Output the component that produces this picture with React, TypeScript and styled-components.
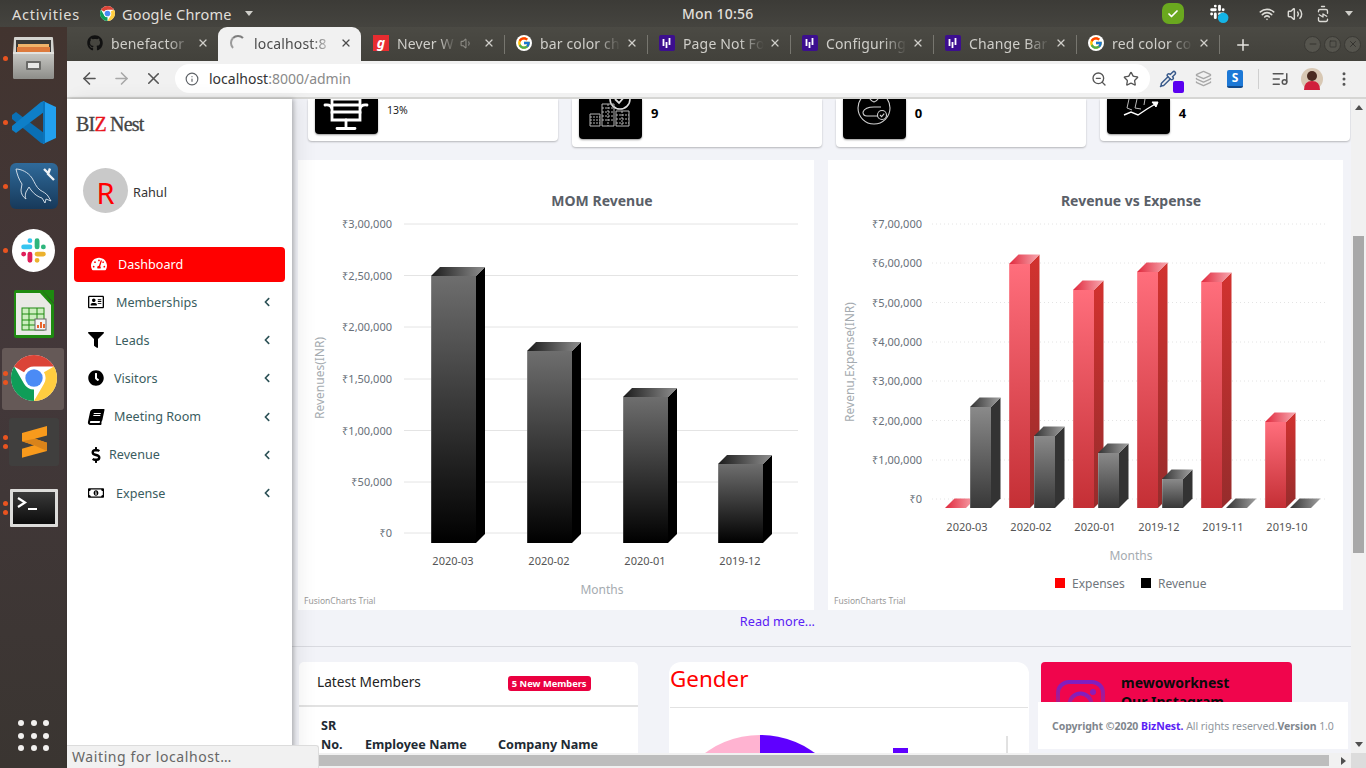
import React from 'react'
import styled, { createGlobalStyle } from 'styled-components'
import { ArrowLeft, ArrowRight, X, Info, ZoomOut, Star, ListMusic, EllipsisVertical, Pipette, Layers, Plus, Minus, Square, Wifi, Volume2, Volume1, BatteryCharging, Check } from 'lucide-react'
import { FaGithub, FaTachometerAlt, FaRegAddressCard, FaFilter, FaClock, FaBook, FaDollarSign, FaRegMoneyBillAlt, FaChevronLeft } from 'react-icons/fa'
import { FcGoogle } from 'react-icons/fc'

const UI_FONT = '"Noto Sans", "Open Sans", sans-serif'

const GlobalStyle = createGlobalStyle`
  html, body {
    margin: 0;
    padding: 0;
    width: 1366px;
    height: 768px;
    overflow: hidden;
    font-family: ${UI_FONT};
  }
  * { box-sizing: border-box; }
`

const Desktop = styled.div`
  width: 1366px;
  height: 768px;
  display: flex;
  flex-direction: column;
  overflow: hidden;
`

/* ---------- ubuntu top bar ---------- */
const TopBar = styled.div`
  height: 27px;
  flex: none;
  display: flex;
  align-items: center;
  background: linear-gradient(#3c3b37, #45443f);
  color: #e0dfda;
  font-size: 14.5px;
  letter-spacing: 0.2px;
`
const TopLeft = styled.div`
  width: 682px;
  flex: none;
  display: flex;
  align-items: center;
  padding-left: 12px;
`
const Activities = styled.span`
  letter-spacing: 0.75px;
`
const AppMenu = styled.div`
  display: flex;
  align-items: center;
  margin-left: 20px;
  gap: 7px;
`
const Caret = styled.span`
  width: 0;
  height: 0;
  margin-left: 6px;
  border-left: 4.5px solid transparent;
  border-right: 4.5px solid transparent;
  border-top: 5px solid #cfcec9;
`
const Clock = styled.div`
  width: 70px;
  white-space: nowrap;
  font-size: 14px;
  font-weight: 500;
`
const Tray = styled.div`
  margin-left: auto;
  display: flex;
  align-items: center;
  padding-right: 11px;
`
const TrayItem = styled.div<{ $w: number; $ml?: number }>`
  width: ${p => p.$w}px;
  margin-left: ${p => p.$ml || 0}px;
  display: flex;
  align-items: center;
  justify-content: center;
  color: #dcdbd6;
`
const GreenShield = styled.div`
  width: 22px;
  height: 21px;
  border-radius: 7px;
  background: #6aa81f;
  display: flex;
  align-items: center;
  justify-content: center;
  color: #fff;
`
const BatteryIcon = styled(BatteryCharging)`
  transform: rotate(-90deg);
`

/* ---------- dock ---------- */
const Workspace = styled.div`
  flex: 1;
  min-height: 0;
  display: flex;
`
const Dock = styled.div`
  width: 67px;
  flex: none;
  display: flex;
  flex-direction: column;
  align-items: stretch;
  background: linear-gradient(#42342f 0%, #43383a 45%, #3a3531 100%);
`
const DockItem = styled.div<{ $active?: boolean; $drop?: number }>`
  position: relative;
  height: 64px;
  display: flex;
  align-items: center;
  justify-content: center;
  margin-top: ${p => p.$drop || 0}px;
  &:first-child { margin-top: -1px; }
  ${p => p.$active && `
    &::before {
      content: '';
      position: absolute;
      left: 2px;
      top: 2px;
      width: 62px;
      height: 62px;
      border-radius: 3px;
      background: #655957;
    }
  `}
  svg { position: relative; }
`
const RunDots = styled.div`
  position: absolute;
  left: 3px;
  top: 0;
  bottom: 0;
  z-index: 1;
  display: flex;
  flex-direction: column;
  justify-content: center;
  gap: 4px;
`
const RunDot = styled.span`
  width: 5px;
  height: 5px;
  border-radius: 50%;
  background: #e95420;
`
const AppGrid = styled.div`
  margin-top: auto;
  margin-bottom: 17px;
  margin-left: 18px;
  display: grid;
  grid-template-columns: repeat(3, 6px);
  gap: 6.5px;
`
const AppGridDot = styled.span`
  width: 6px;
  height: 6px;
  border-radius: 50%;
  background: #f2f0ee;
`

/* ---------- browser chrome ---------- */
const Browser = styled.div`
  flex: 1;
  min-width: 0;
  display: flex;
  flex-direction: column;
  position: relative;
`
const TabStrip = styled.div`
  height: 34px;
  flex: none;
  display: flex;
  align-items: stretch;
  padding-left: 8px;
  background: linear-gradient(#4b4a44, #42413b);
`
const Tab = styled.div<{ $active?: boolean; $first?: boolean }>`
  position: relative;
  width: 143px;
  flex: none;
  display: flex;
  align-items: center;
  padding: 0 9px 2px 12px;
  font-size: 14px;
  letter-spacing: 0.15px;
  color: ${p => (p.$active ? '#4c4c4c' : '#cfcec9')};
  background: ${p => (p.$active ? '#f1f1f1' : 'transparent')};
  border-radius: 9px 9px 0 0;
  ${p => !p.$active && !p.$first && `
    &::before {
      content: '';
      position: absolute;
      left: 0;
      top: 8px;
      bottom: 7px;
      width: 1px;
      background: #77766f;
    }
  `}
`
const Favicon = styled.div`
  width: 16px;
  height: 16px;
  flex: none;
  margin-right: 8px;
  display: flex;
  align-items: center;
  justify-content: center;
`
const GoogleIcon = styled(Favicon)`
  background: #fff;
  border-radius: 50%;
`
const GaanaIcon = styled(Favicon)`
  background: #e72c30;
  color: #fff;
  font-size: 14px;
  font-weight: 700;
  font-style: italic;
  line-height: 16px;
`
const HackIcon = styled(Favicon)`
  background: #3c0e8f;
  border-radius: 2px;
`
const Spinner = styled(Favicon)`
  border-radius: 50%;
  border: 2px solid transparent;
  border-top-color: #7d7d7d;
  border-left-color: #9a9a9a;
`
const TabTitle = styled.div`
  flex: 1;
  min-width: 0;
  overflow: hidden;
  white-space: nowrap;
  -webkit-mask-image: linear-gradient(90deg, #000 66%, transparent 94%);
  mask-image: linear-gradient(90deg, #000 66%, transparent 94%);
`
const TabClose = styled.div`
  width: 12px;
  flex: none;
  display: flex;
  align-items: center;
  justify-content: center;
`
const AudioIcon = styled(Volume1)`
  flex: none;
  margin-right: 10px;
  color: #8c8b85;
`
const NewTab = styled.div`
  width: 46px;
  border-left: 1px solid #77766f;
  margin: 8px 0 7px;
  display: flex;
  align-items: center;
  justify-content: center;
  color: #e6e5e0;
`
const WindowButtons = styled.div`
  margin-left: auto;
  margin-right: 5px;
  display: flex;
  align-items: center;
  gap: 3px;
`
const WindowButton = styled.div`
  width: 17px;
  height: 17px;
  border-radius: 50%;
  background: #56554e;
  border: 1px solid #3a3934;
  color: #2f2e2a;
  display: flex;
  align-items: center;
  justify-content: center;
`
const Toolbar = styled.div`
  height: 38px;
  flex: none;
  display: flex;
  align-items: center;
  padding-bottom: 1px;
  background: #f1f1f1;
  border-bottom: 2px solid #d6d6d4;
`
const NavButton = styled.div<{ $dim?: boolean; $w: number }>`
  width: ${p => p.$w}px;
  flex: none;
  display: flex;
  align-items: center;
  justify-content: center;
  color: ${p => (p.$dim ? '#a8a8a8' : '#555')};
`
const AddressBar = styled.div`
  width: 975px;
  height: 29px;
  flex: none;
  display: flex;
  align-items: center;
  padding: 0 3px 0 10px;
  background: #fff;
  border-radius: 15px;
  font-size: 14px;
  color: #8a8a8a;
`
const Host = styled.span`
  color: #333;
`
const UrlText = styled.div`
  margin-left: 10px;
  flex: 1;
`
const BlueS = styled.div`
  width: 16px;
  height: 18px;
  background: #1c78d6;
  border-radius: 2px;
  border-bottom: 2px solid #124a8a;
  color: #fff;
  font-weight: 700;
  font-size: 12px;
  line-height: 16px;
  text-align: center;
`
const ExtBadge = styled.div`
  position: absolute;
  right: 2px;
  top: 11px;
  width: 11px;
  height: 12px;
  border-radius: 2px;
  background: #5a00f0;
`
const ExtSlot = styled(NavButton)`
  position: relative;
`
const ToolbarSep = styled.div`
  width: 1px;
  height: 20px;
  background: #cfcfcf;
  flex: none;
`

/* ---------- page ---------- */
const Viewport = styled.div`
  flex: 1;
  min-height: 0;
  display: flex;
  position: relative;
`
const Sidebar = styled.aside`
  width: 225px;
  flex: none;
  background: #fff;
  position: relative;
  z-index: 2;
  box-shadow: 2px 0 4px rgba(0, 0, 0, 0.22), 8px 0 18px rgba(0, 0, 0, 0.07);
`
const Logo = styled.div`
  height: 50px;
  padding: 13px 0 0 9px;
  font-family: "Liberation Serif", serif;
  font-size: 20px;
  line-height: 24px;
  letter-spacing: -0.8px;
  color: #444;
  -webkit-text-stroke: 0.3px #444;
`
const LogoRed = styled.span`
  color: #e8141c;
  -webkit-text-stroke: 0.3px #e8141c;
`
const UserRow = styled.div`
  display: flex;
  align-items: center;
  margin: 19px 0 34px 16px;
  gap: 5px;
  font-size: 12.7px;
  line-height: 20px;
  color: #333;
`
const UserName = styled.span`
  margin-top: 2px;
`
const Avatar = styled.div`
  width: 45px;
  height: 45px;
  border-radius: 50%;
  background: #c9c9c9;
  color: #f00;
  font-size: 29px;
  line-height: 50px;
  text-align: center;
`
const NavRow = styled.div`
  height: 38.2px;
  display: flex;
  align-items: center;
  padding: 0 20px 0 21px;
  font-size: 12.6px;
  color: #3a5c60;
`
const NavActive = styled(NavRow)`
  height: 35px;
  margin: 0 7px 1px;
  padding-left: 17px;
  padding-bottom: 1px;
  border-radius: 4px;
  background: #f00;
  color: #fff;
`
const NavIcon = styled.div<{ $textAt: number; $light?: boolean; $skew?: boolean }>`
  width: ${p => p.$textAt}px;
  flex: none;
  display: flex;
  align-items: center;
  color: ${p => (p.$light ? '#fff' : '#000')};
  svg {
    height: 16px;
    width: auto;
    ${p => p.$skew && 'transform: skewX(-12deg);'}
  }
`
const NavLabel = styled.span`
  flex: 1;
`
const Chevron = styled.div`
  display: flex;
  color: #2c5156;
`

const RightPane = styled.div`
  flex: 1;
  min-width: 0;
  display: flex;
  flex-direction: column;
`
const PaneRow = styled.div`
  flex: 1;
  min-height: 0;
  display: flex;
`
const Main = styled.main`
  flex: 1;
  min-width: 0;
  overflow: hidden;
  position: relative;
  background: #f2f3f8;
`
const StatRow = styled.div`
  height: 48px;
  display: grid;
  grid-template-columns: repeat(4, 1fr);
  align-items: start;
  gap: 13.5px;
  padding: 0 1px 0 16px;
`
const StatCard = styled.div<{ $h: number }>`
  height: ${p => p.$h}px;
  display: flex;
  padding-left: 7px;
  gap: 9px;
  background: #fff;
  border-radius: 0 0 4px 4px;
  box-shadow: 0 1px 2px rgba(0, 0, 0, 0.25);
`
const StatIcon = styled.div<{ $h: number }>`
  width: 63px;
  height: ${p => p.$h}px;
  flex: none;
  display: flex;
  align-items: flex-end;
  overflow: hidden;
  background: #000;
  border-radius: 0 0 4px 4px;
  box-shadow: 0 1px 2px rgba(0, 0, 0, 0.4);
`
const StatPercent = styled.div`
  margin-top: 4px;
  font-size: 10.5px;
  line-height: 14px;
  color: #222;
`
const StatNumber = styled.div`
  margin-top: 5px;
  font-size: 13px;
  line-height: 18px;
  font-weight: 700;
  color: #000;
`
const ChartRow = styled.div`
  display: flex;
  gap: 14px;
  margin-top: 13px;
  padding-left: 6px;
`
const ChartPanel = styled.section<{ $w: number }>`
  width: ${p => p.$w}px;
  height: 450px;
  flex: none;
  background: #fff;
  svg { display: block; }
`
const ReadMore = styled.div`
  width: 523px;
  height: 36px;
  padding-top: 2px;
  text-align: right;
  font-size: 12.7px;
  line-height: 18px;
  color: #5a21f5;
`
const Rule = styled.hr`
  margin: 0;
  border: 0;
  border-top: 1px solid #d9dae0;
`
const BottomRow = styled.div`
  display: flex;
  align-items: flex-start;
  margin-top: 15px;
  padding-left: 7px;
`
const MembersCard = styled.div`
  width: 339px;
  flex: none;
  background: #fff;
  border-radius: 5px 5px 0 0;
`
const MembersHead = styled.div`
  height: 45px;
  display: flex;
  align-items: center;
  padding: 0 0 4px 18px;
  border-bottom: 2px solid #e2e2e2;
  font-size: 13.7px;
  color: #222;
`
const Badge = styled.span`
  margin-left: 87px;
  margin-top: 3px;
  height: 15px;
  padding: 0 4px;
  border-radius: 3px;
  background: #ea0040;
  color: #fff;
  font-size: 9.3px;
  font-weight: 700;
  line-height: 15px;
`
const MembersTable = styled.table`
  margin: 9px 0 0 17px;
  border-collapse: collapse;
  font-size: 12.6px;
  line-height: 19px;
  color: #212a33;
  th {
    padding: 0 5px;
    text-align: left;
    vertical-align: bottom;
    font-weight: 700;
  }
`
const SrHead = styled.th`
  width: 44px;
`
const NameHead = styled.th`
  width: 133px;
`
const GenderCard = styled.div`
  width: 360px;
  height: 200px;
  margin-left: 31px;
  flex: none;
  overflow: hidden;
  background: #fff;
  border-radius: 12px 12px 0 0;
`
const GenderTitle = styled.h3`
  height: 46px;
  margin: 0 1px;
  border-bottom: 1px solid #e2e2e2;
  font-size: 22.4px;
  font-weight: 400;
  line-height: 34px;
  color: #f00;
`
const InstaCard = styled.div`
  width: 251px;
  height: 80px;
  margin-left: 12px;
  flex: none;
  display: flex;
  overflow: hidden;
  padding: 11px 0 0 15px;
  gap: 16px;
  background: #f0054c;
  border-radius: 4px 4px 0 0;
  color: #0b0b0b;
`
const InstaGlyph = styled.div`
  margin-top: 7px;
  flex: none;
`
const InstaName = styled.div`
  font-size: 14px;
  font-weight: 700;
  line-height: 19px;
`
const Footer = styled.footer`
  position: absolute;
  right: 3px;
  bottom: 4px;
  width: 310px;
  height: 47px;
  display: flex;
  align-items: center;
  padding-left: 14px;
  background: #fff;
  white-space: nowrap;
  font-size: 10.5px;
  color: #8f969d;
  letter-spacing: -0.05px;
`
const FooterBold = styled.b`
  font-weight: 700;
  color: #7f868d;
`
const FooterLink = styled.b`
  font-weight: 700;
  color: #5a21f5;
`
const StatusBubble = styled.div`
  position: absolute;
  left: 0;
  bottom: 0;
  z-index: 5;
  width: 252px;
  height: 23px;
  padding-left: 5px;
  background: #f1f1f1;
  border-top: 1px solid #dcdcdc;
  border-right: 1px solid #dcdcdc;
  border-radius: 0 3px 0 0;
  font-size: 14px;
  line-height: 22px;
  letter-spacing: 0.6px;
  color: #666;
`

/* ---------- scrollbars ---------- */
const VScroll = styled.div`
  width: 15px;
  flex: none;
  display: flex;
  flex-direction: column;
  align-items: center;
  background: #f1f1f1;
`
const VArrow = styled.div<{ $down?: boolean }>`
  width: 0;
  height: 0;
  border-left: 4px solid transparent;
  border-right: 4px solid transparent;
  ${p => (p.$down ? 'border-top: 5px solid #505050;' : 'border-bottom: 5px solid #505050;')}
  margin: ${p => (p.$down ? 'auto 0 6px' : '6px 0 0')};
`
const VThumb = styled.div`
  width: 11px;
  height: 317px;
  margin-top: 126px;
  flex: none;
  background: #a8a8a8;
`
const HScroll = styled.div`
  height: 15px;
  flex: none;
  display: flex;
  align-items: center;
  background: #f1f1f1;
`
const HThumb = styled.div`
  flex: 1;
  height: 11px;
  margin-right: 12px;
  background: #bdbdbd;
`
const HArrow = styled.div`
  width: 0;
  height: 0;
  margin-right: 5px;
  border-top: 4px solid transparent;
  border-bottom: 4px solid transparent;
  border-left: 5px solid #505050;
`
const ScrollCorner = styled.div`
  width: 15px;
  height: 15px;
  background: #dcdcdc;
`

/* ---------- logos drawn inline ---------- */
const CHROME_SLICE = 'M4.95 13A22 22 0 0 1 43.05 13H24A11 11 0 0 0 14.47 18.5Z'

function ChromeLogo({ size }: { size: number }) {
  return (
    <svg width={size} height={size} viewBox="2 2 44 44">
      <circle cx="24" cy="24" r="22" fill="#fff" />
      <path d={CHROME_SLICE} fill="#db4437" />
      <path d={CHROME_SLICE} fill="#ffcd40" transform="rotate(120 24 24)" />
      <path d={CHROME_SLICE} fill="#0f9d58" transform="rotate(240 24 24)" />
      <circle cx="24" cy="24" r="10.5" fill="#fff" />
      <circle cx="24" cy="24" r="8.3" fill="#4b8bf5" />
    </svg>
  )
}

function SlackPills({ mono }: { mono?: boolean }) {
  const c = (v: string) => (mono ? '#fff' : v)
  return (
    <g fill="none" strokeWidth="2.7" strokeLinecap="round">
      <path d="M6.5 10H10M10 6.5v.01" stroke={c('#36c5f0')} />
      <path d="M14 6.5V10M17.5 10h.01" stroke={c('#2eb67d')} />
      <path d="M14 14h3.5M14 17.5v.01" stroke={c('#ecb22e')} />
      <path d="M10 14v3.5M6.5 14h.01" stroke={c('#e01e5a')} />
    </g>
  )
}

function FilesIcon() {
  return (
    <svg width="45" height="44" viewBox="0 0 45 44">
      <defs>
        <linearGradient id="cabinet" x1="0" y1="0" x2="0" y2="1">
          <stop offset="0" stopColor="#c9c9c5" />
          <stop offset="1" stopColor="#8d8d89" />
        </linearGradient>
      </defs>
      <path d="M3 2q0-1 1-1h37q1 0 1 1l1 15H2z" fill="#d4d4d0" />
      <rect x="5" y="4" width="35" height="13" fill="#3b3a38" />
      <rect x="7" y="8" width="31" height="5" fill="#f0b36a" />
      <rect x="6" y="11" width="33" height="6" fill="#dd7a3c" />
      <rect x="2" y="16" width="41" height="27" rx="1.5" fill="url(#cabinet)" />
      <rect x="2" y="16" width="41" height="2" fill="#e2e2df" />
      <rect x="15" y="25" width="15" height="9" rx="1" fill="#6a6a67" />
      <rect x="17" y="27" width="11" height="5" fill="#e8e8e6" />
    </svg>
  )
}

function CodeIcon() {
  return (
    <svg width="44" height="43" viewBox="0 0 44 43">
      <path d="M0 14 4 11 32 32 32 43 29 42 0 18z" fill="#0a6fb4" />
      <path d="M0 29 4 32 32 11 32 0 29 1 0 25z" fill="#0e7fc8" />
      <path d="M31 0 44 6V37L31 43z" fill="#22a0ef" />
      <path d="M31 0 33 1V42L31 43z" fill="#0b74bc" />
    </svg>
  )
}

function WorkbenchIcon() {
  return (
    <svg width="48" height="46" viewBox="0 0 48 46">
      <defs>
        <linearGradient id="wbBg" x1="0" y1="0" x2="0" y2="1">
          <stop offset="0" stopColor="#2f6a9a" />
          <stop offset="1" stopColor="#17395a" />
        </linearGradient>
      </defs>
      <rect width="48" height="46" rx="6" fill="url(#wbBg)" />
      <path d="M6 6c5 0 12 3 16 9 3 5 4 9 8 12 3 2 6 3 8 6l3 5-5-2-1 4-3-5c-4-1-8-4-11-8l-2-3-3 5c-1 3-1 5 0 7-3-2-5-5-5-9l1-6C9 17 7 11 6 6z" fill="none" stroke="#e0e8ef" strokeWidth="0.9" />
      <path d="M34 6l5 5M40 5.500l-2 5.500 6 6" fill="none" stroke="#eef2f5" strokeWidth="2.4" />
    </svg>
  )
}

function SlackIcon() {
  return (
    <svg width="43" height="43" viewBox="0 0 24 24">
      <circle cx="12" cy="12" r="12" fill="#fff" />
      <SlackPills />
    </svg>
  )
}

function CalcIcon() {
  return (
    <svg width="42" height="48" viewBox="0 0 42 48">
      <path d="M1 2q0-2 2-2h26l12 14v32q0 2-2 2H3q-2 0-2-2z" fill="#1e8a10" />
      <path d="M3 3h24l11 12v30H3z" fill="#e9e9e6" />
      <path d="M29 0h12v13z" fill="#1e8a10" />
      <rect x="9" y="18" width="22" height="22" fill="#cdeec0" stroke="#1e8a10" />
      <path d="M9 24h22M9 30h22M9 35h22M16 18v22M24 18v22" stroke="#1e8a10" fill="none" />
      <rect x="22" y="29" width="11" height="11" fill="#f4f4f4" stroke="#666" />
      <path d="M24 38v-3h2v3zM27 38v-6h2v6zM30 38v-4h2v4z" fill="#e8642a" />
    </svg>
  )
}

function SublimeIcon() {
  return (
    <svg width="50" height="48" viewBox="0 0 50 48">
      <rect width="50" height="48" rx="3" fill="#403f3e" />
      <path d="M13 15 38 8V17.500L26 20.700 38 24.700V33L13 39.700V30.700L25 27.300 13 23.300z" fill="#f89a1c" />
      <path d="M13 23.300 26 20.700 38 24.700V33L25 27.300z" fill="#d9831a" />
    </svg>
  )
}

function TerminalIcon() {
  return (
    <svg width="48" height="38" viewBox="0 0 48 38">
      <defs>
        <linearGradient id="termBg" x1="0" y1="0" x2="0" y2="1">
          <stop offset="0" stopColor="#3a3a3a" />
          <stop offset="1" stopColor="#0c0c0c" />
        </linearGradient>
      </defs>
      <rect width="48" height="38" rx="1" fill="#dcdcda" />
      <rect x="3" y="3" width="42" height="32" fill="url(#termBg)" />
      <path d="M8 9l7 4.500-7 4.500" fill="none" stroke="#fff" strokeWidth="2.2" />
      <path d="M18 20h9" stroke="#fff" strokeWidth="2" />
    </svg>
  )
}

function HackMark() {
  return (
    <svg width="12" height="12" viewBox="0 0 12 12">
      <path d="M2.500 2v7M5.500 5v6M8.500 1v7" stroke="#fff" strokeWidth="1.800" fill="none" />
    </svg>
  )
}

function InstaIcon() {
  return (
    <svg width="49" height="49" viewBox="0 0 49 49" fill="none">
      <defs>
        <linearGradient id="instaGrad" x1="0" y1="0" x2="0" y2="1">
          <stop offset="0" stopColor="#7e1fc2" />
          <stop offset="0.6" stopColor="#c8166e" />
          <stop offset="1" stopColor="#f5602a" />
        </linearGradient>
      </defs>
      <rect x="2" y="2" width="45" height="45" rx="11" stroke="url(#instaGrad)" strokeWidth="4" />
      <circle cx="24.500" cy="24.500" r="11" stroke="url(#instaGrad)" strokeWidth="4" />
      <circle cx="37" cy="12" r="3" fill="#8a1db8" />
    </svg>
  )
}

function ChairGlyph() {
  return (
    <svg width="63" height="63" viewBox="0 0 63 63" fill="none" stroke="#fff" strokeWidth="2.800" strokeLinecap="round">
      <path d="M18 28h26M18 34h26M17 28v9M45 28v9" />
      <path d="M10 34q6-1 7 4v3h28v-3q1-5 7-4" />
      <path d="M17 41v8h28v-8" />
      <path d="M31 49v8M22 57.500h18" />
    </svg>
  )
}

function TowerGlyph() {
  return (
    <svg width="63" height="63" viewBox="0 0 63 63" fill="none" stroke="#b5b5b5" strokeWidth="1">
      <circle cx="41" cy="23" r="10" stroke="#ddd" strokeWidth="1.600" />
      <path d="M36 23l4 4 6-7" stroke="#ddd" strokeWidth="1.800" />
      <path d="M11 38h10v12H11zM23 28h12v22H23zM37 35h13v15H37z" />
      <path d="M11 41h10M11 44h10M11 47h10M23 32h12M23 36h12M23 40h12M23 44h12M37 39h13M37 43h13M37 47h13M29 28v22M43 35v15" strokeDasharray="2 1" />
    </svg>
  )
}

function PersonGlyph() {
  return (
    <svg width="63" height="63" viewBox="0 0 63 63" fill="none" stroke="#cfcfcf" strokeWidth="1.100">
      <circle cx="31" cy="32" r="16" />
      <path d="M26 16q-1 8 5 10 6-2 5-10" />
      <path d="M20 36q2-5 11-5h7M20 36q0 4 4 4h12" />
      <circle cx="39" cy="39" r="4.500" fill="#000" />
      <path d="M37 39l1.600 1.600 2.600-3" />
    </svg>
  )
}

function GrowthGlyph() {
  return (
    <svg width="63" height="63" viewBox="0 0 63 63" fill="none" stroke="#fff" strokeWidth="1">
      <path d="M17 44l7-3 7 3 9-6 10-6" strokeWidth="1.400" />
      <path d="M45 31h6l-2 5z" fill="#fff" />
      <path d="M22 28l-2 9 5 2M30 28l-2 9 6 1M38 28l-1 6" stroke="#bbb" />
    </svg>
  )
}

/* ---------- charts ---------- */
const CHART_FONT = '"Noto Sans", sans-serif'

type BarProps = { x: number; w: number; top: number; bottom: number; d: number; palette: string }

function Bar3D({ x, w, top, bottom, d, palette }: BarProps) {
  return (
    <g>
      <polygon points={`${x + w},${top} ${x + w + d},${top - d} ${x + w + d},${bottom - d} ${x + w},${bottom}`} fill={`url(#${palette}Side)`} />
      <polygon points={`${x},${top} ${x + d},${top - d} ${x + w + d},${top - d} ${x + w},${top}`} fill={`url(#${palette}Cap)`} />
      {bottom > top && <rect x={x} y={top} width={w} height={bottom - top} fill={`url(#${palette}Front)`} />}
      {bottom > top && <rect x={x} y={top} width={1} height={bottom - top} fill="#fff" opacity="0.18" />}
    </g>
  )
}

function Palettes() {
  return (
    <defs>
      <linearGradient id="blackFront" x1="0" y1="0" x2="0" y2="1">
        <stop offset="0" stopColor="#6e6e6e" />
        <stop offset="1" stopColor="#000" />
      </linearGradient>
      <linearGradient id="blackCap" x1="0" y1="0" x2="1" y2="0">
        <stop offset="0" stopColor="#1a1a1a" />
        <stop offset="1" stopColor="#8f8f8f" />
      </linearGradient>
      <linearGradient id="blackSide" x1="0" y1="0" x2="0" y2="1">
        <stop offset="0" stopColor="#000" />
        <stop offset="1" stopColor="#000" />
      </linearGradient>
      <linearGradient id="greyFront" x1="0" y1="0" x2="0" y2="1">
        <stop offset="0" stopColor="#8a8a8a" />
        <stop offset="1" stopColor="#383838" />
      </linearGradient>
      <linearGradient id="greyCap" x1="0" y1="0" x2="1" y2="0">
        <stop offset="0" stopColor="#333" />
        <stop offset="1" stopColor="#a0a0a0" />
      </linearGradient>
      <linearGradient id="greySide" x1="0" y1="0" x2="0" y2="1">
        <stop offset="0" stopColor="#333" />
        <stop offset="1" stopColor="#333" />
      </linearGradient>
      <linearGradient id="redFront" x1="0" y1="0" x2="0" y2="1">
        <stop offset="0" stopColor="#ff6e7c" />
        <stop offset="1" stopColor="#c42f35" />
      </linearGradient>
      <linearGradient id="redCap" x1="0" y1="0" x2="1" y2="0">
        <stop offset="0" stopColor="#e0283c" />
        <stop offset="1" stopColor="#f8a8b0" />
      </linearGradient>
      <linearGradient id="redSide" x1="0" y1="0" x2="0" y2="1">
        <stop offset="0" stopColor="#d2322f" />
        <stop offset="1" stopColor="#962c2c" />
      </linearGradient>
    </defs>
  )
}

type AxisLabel = { label: string; y: number }

function ChartAxis({ rows, left, right, labelX, dotted }: { rows: AxisLabel[]; left: number; right: number; labelX: number; dotted?: boolean }) {
  return (
    <g>
      {rows.map(r => (
        <g key={r.label}>
          <line x1={left} x2={right} y1={r.y} y2={r.y} stroke="#e4e4e4" strokeWidth="1" strokeDasharray={dotted ? '1 3' : undefined} />
          <text x={labelX} y={r.y + 4} fontSize="11" fill="#68707a" textAnchor="end">{r.label}</text>
        </g>
      ))}
    </g>
  )
}

const momRows: AxisLabel[] = [
  { label: '₹3,00,000', y: 224 },
  { label: '₹2,50,000', y: 275.5 },
  { label: '₹2,00,000', y: 327 },
  { label: '₹1,50,000', y: 379 },
  { label: '₹1,00,000', y: 430.5 },
  { label: '₹50,000', y: 482 },
  { label: '₹0', y: 533 },
]
const momBars = [
  { label: '2020-03', x: 431, top: 276 },
  { label: '2020-02', x: 527, top: 351 },
  { label: '2020-01', x: 623, top: 397 },
  { label: '2019-12', x: 718, top: 464 },
]

function MomChart() {
  return (
    <svg width="516" height="450" viewBox="298 160 516 450" fontFamily={CHART_FONT}>
      <Palettes />
      <text x="602" y="206" fontSize="14" fontWeight="700" fill="#5a6068" textAnchor="middle">MOM Revenue</text>
      <ChartAxis rows={momRows} left={404} right={798} labelX={392} />
      {momBars.map(b => (
        <g key={b.label}>
          <Bar3D x={b.x} w={45} top={b.top} bottom={543} d={9} palette="black" />
          <text x={b.x + 22} y={565} fontSize="11" fill="#555" textAnchor="middle">{b.label}</text>
        </g>
      ))}
      <text x="602" y="594" fontSize="12" fill="#a5abb0" textAnchor="middle">Months</text>
      <text transform="translate(324 378) rotate(-90)" fontSize="12" fill="#a5abb0" textAnchor="middle">Revenues(INR)</text>
      <text x="304" y="604" fontSize="8.5" fill="#999">FusionCharts Trial</text>
    </svg>
  )
}

const revRows: AxisLabel[] = [
  { label: '₹7,00,000', y: 224 },
  { label: '₹6,00,000', y: 263 },
  { label: '₹5,00,000', y: 302.5 },
  { label: '₹4,00,000', y: 342 },
  { label: '₹3,00,000', y: 381 },
  { label: '₹2,00,000', y: 420.5 },
  { label: '₹1,00,000', y: 460 },
  { label: '₹0', y: 499 },
]
const revBars = [
  { label: '2020-03', x: 945, exp: 508, rev: 407 },
  { label: '2020-02', x: 1009, exp: 264, rev: 436 },
  { label: '2020-01', x: 1073, exp: 290, rev: 453 },
  { label: '2019-12', x: 1137, exp: 272, rev: 479 },
  { label: '2019-11', x: 1201, exp: 282, rev: 508 },
  { label: '2019-10', x: 1265, exp: 422, rev: 508 },
]

function RevenueChart() {
  return (
    <svg width="515" height="450" viewBox="828 160 515 450" fontFamily={CHART_FONT}>
      <text x="1131" y="206" fontSize="14" fontWeight="700" fill="#5a6068" textAnchor="middle">Revenue vs Expense</text>
      <ChartAxis rows={revRows} left={932} right={1328} labelX={922} dotted />
      {revBars.map(b => (
        <g key={b.label}>
          <Bar3D x={b.x} w={21} top={b.exp} bottom={508} d={9.5} palette="red" />
          <Bar3D x={b.x + 25} w={21} top={b.rev} bottom={508} d={9.5} palette="grey" />
          <text x={b.x + 22} y={531} fontSize="11" fill="#555" textAnchor="middle">{b.label}</text>
        </g>
      ))}
      <text x="1131" y="560" fontSize="12" fill="#a5abb0" textAnchor="middle">Months</text>
      <rect x="1055" y="578" width="10" height="10" fill="#f00" />
      <text x="1072" y="588" fontSize="12" fill="#6f767c">Expenses</text>
      <rect x="1141" y="578" width="10" height="10" fill="#000" />
      <text x="1158" y="588" fontSize="12" fill="#6f767c">Revenue</text>
      <text transform="translate(854 362) rotate(-90)" fontSize="12" fill="#a5abb0" textAnchor="middle">Revenu,Expense(INR)</text>
      <text x="834" y="604" fontSize="8.5" fill="#999">FusionCharts Trial</text>
    </svg>
  )
}

function GenderChart() {
  return (
    <svg width="360" height="154" viewBox="669 708 360 154">
      <path d="M760 828V735A93 93 0 1 0 760 921Z" fill="#ffb3d1" />
      <path d="M760 828V735A93 93 0 1 1 760 921Z" fill="#5f00ff" />
      <rect x="893" y="748" width="15" height="60" fill="#5f00ff" />
      <line x1="1007" x2="1007" y1="736" y2="860" stroke="#c4c4c4" strokeWidth="1" />
    </svg>
  )
}

const closeIcon = <TabClose><X size={12} strokeWidth={2.4} /></TabClose>

const tabs = [
  { title: 'bar color ch', icon: <GoogleIcon><FcGoogle size={14} /></GoogleIcon> },
  { title: 'Page Not Fo', icon: <HackIcon><HackMark /></HackIcon> },
  { title: 'Configuring', icon: <HackIcon><HackMark /></HackIcon> },
  { title: 'Change Bar', icon: <HackIcon><HackMark /></HackIcon> },
  { title: 'red color co', icon: <GoogleIcon><FcGoogle size={14} /></GoogleIcon> },
]

const navItems = [
  { label: 'Memberships', icon: <FaRegAddressCard />, textAt: 28 },
  { label: 'Leads', icon: <FaFilter />, textAt: 27 },
  { label: 'Visitors', icon: <FaClock />, textAt: 26 },
  { label: 'Meeting Room', icon: <FaBook />, textAt: 26, skew: true },
  { label: 'Revenue', icon: <FaDollarSign />, textAt: 21 },
  { label: 'Expense', icon: <FaRegMoneyBillAlt />, textAt: 28 },
]

function dots(n: number) {
  return (
    <RunDots>
      {Array.from({ length: n }).map((_, i) => <RunDot key={i} />)}
    </RunDots>
  )
}

export default function App() {
  return (
    <Desktop>
      <GlobalStyle />
      <TopBar>
        <TopLeft>
          <Activities>Activities</Activities>
          <AppMenu>
            <ChromeLogo size={15} />
            Google Chrome
            <Caret />
          </AppMenu>
        </TopLeft>
        <Clock>Mon 10:56</Clock>
        <Tray>
          <TrayItem $w={46}><GreenShield><Check size={12} strokeWidth={3.5} /></GreenShield></TrayItem>
          <TrayItem $w={46}>
            <svg width="21" height="20" viewBox="4.5 4.500 19 19">
              <SlackPills mono />
              <circle cx="17.500" cy="17.500" r="5" fill="#14b4e6" />
            </svg>
          </TrayItem>
          <TrayItem $w={28} $ml={11}><Wifi size={16} strokeWidth={2.4} /></TrayItem>
          <TrayItem $w={28}><Volume2 size={16} strokeWidth={2.2} /></TrayItem>
          <TrayItem $w={28}><BatteryIcon size={18} strokeWidth={1.8} /></TrayItem>
          <TrayItem $w={18}><Caret /></TrayItem>
        </Tray>
      </TopBar>

      <Workspace>
        <Dock>
          <DockItem>{dots(1)}<FilesIcon /></DockItem>
          <DockItem>{dots(1)}<CodeIcon /></DockItem>
          <DockItem>{dots(1)}<WorkbenchIcon /></DockItem>
          <DockItem>{dots(1)}<SlackIcon /></DockItem>
          <DockItem><CalcIcon /></DockItem>
          <DockItem $active>{dots(2)}<ChromeLogo size={46} /></DockItem>
          <DockItem>{dots(2)}<SublimeIcon /></DockItem>
          <DockItem $drop={2}>{dots(2)}<TerminalIcon /></DockItem>
          <AppGrid>
            {Array.from({ length: 9 }).map((_, i) => <AppGridDot key={i} />)}
          </AppGrid>
        </Dock>

        <Browser>
          <TabStrip>
            <Tab $first>
              <Favicon><FaGithub size={16} color="#111" /></Favicon>
              <TabTitle>benefactor</TabTitle>
              {closeIcon}
            </Tab>
            <Tab $active>
              <Spinner />
              <TabTitle>localhost:8</TabTitle>
              {closeIcon}
            </Tab>
            <Tab $first>
              <GaanaIcon>g</GaanaIcon>
              <TabTitle>Never W</TabTitle>
              <AudioIcon size={13} />
              {closeIcon}
            </Tab>
            {tabs.map(t => (
              <Tab key={t.title}>
                {t.icon}
                <TabTitle>{t.title}</TabTitle>
                {closeIcon}
              </Tab>
            ))}
            <NewTab><Plus size={18} strokeWidth={2} /></NewTab>
            <WindowButtons>
              <WindowButton><Minus size={10} /></WindowButton>
              <WindowButton><Square size={8} /></WindowButton>
              <WindowButton><X size={10} /></WindowButton>
            </WindowButtons>
          </TabStrip>

          <Toolbar>
            <NavButton $w={44}><ArrowLeft size={19} strokeWidth={2} /></NavButton>
            <NavButton $w={20} $dim><ArrowRight size={19} strokeWidth={2} /></NavButton>
            <NavButton $w={44}><X size={19} strokeWidth={2} /></NavButton>
            <AddressBar>
              <Info size={14} color="#5f6368" />
              <UrlText><Host>localhost</Host>:8000/admin</UrlText>
              <NavButton $w={32}><ZoomOut size={16} /></NavButton>
              <NavButton $w={32}><Star size={16} /></NavButton>
            </AddressBar>
            <ExtSlot $w={36}>
              <Pipette size={18} color="#3a5b8c" />
              <ExtBadge />
            </ExtSlot>
            <NavButton $w={34} $dim><Layers size={17} /></NavButton>
            <NavButton $w={30}><BlueS>S</BlueS></NavButton>
            <NavButton $w={8} />
            <ToolbarSep />
            <NavButton $w={42}><ListMusic size={18} /></NavButton>
            <NavButton $w={22}>
              <svg width="22" height="22" viewBox="0 0 22 22">
                <circle cx="11" cy="11" r="11" fill="#d8c8b4" />
                <circle cx="11" cy="8" r="5" fill="#4a2a20" />
                <path d="M3 22q0-9 8-9t8 9z" fill="#d0203c" />
              </svg>
            </NavButton>
            <NavButton $w={42}><EllipsisVertical size={18} /></NavButton>
          </Toolbar>

          <Viewport>
            <Sidebar>
              <Logo>BI<LogoRed>Z</LogoRed> Nest</Logo>
              <UserRow>
                <Avatar>R</Avatar>
                <UserName>Rahul</UserName>
              </UserRow>
              <NavActive>
                <NavIcon $textAt={27} $light><FaTachometerAlt /></NavIcon>
                <NavLabel>Dashboard</NavLabel>
              </NavActive>
              {navItems.map(n => (
                <NavRow key={n.label}>
                  <NavIcon $textAt={n.textAt} $skew={n.skew}>{n.icon}</NavIcon>
                  <NavLabel>{n.label}</NavLabel>
                  <Chevron><FaChevronLeft size={10} /></Chevron>
                </NavRow>
              ))}
            </Sidebar>

            <RightPane>
              <PaneRow>
                <Main>
                  <StatRow>
                    <StatCard $h={42}>
                      <StatIcon $h={35}><ChairGlyph /></StatIcon>
                      <StatPercent>13%</StatPercent>
                    </StatCard>
                    <StatCard $h={48}>
                      <StatIcon $h={40}><TowerGlyph /></StatIcon>
                      <StatNumber>9</StatNumber>
                    </StatCard>
                    <StatCard $h={48}>
                      <StatIcon $h={40}><PersonGlyph /></StatIcon>
                      <StatNumber>0</StatNumber>
                    </StatCard>
                    <StatCard $h={42}>
                      <StatIcon $h={35}><GrowthGlyph /></StatIcon>
                      <StatNumber>4</StatNumber>
                    </StatCard>
                  </StatRow>

                  <ChartRow>
                    <ChartPanel $w={516}><MomChart /></ChartPanel>
                    <ChartPanel $w={515}><RevenueChart /></ChartPanel>
                  </ChartRow>
                  <ReadMore>Read more...</ReadMore>
                  <Rule />

                  <BottomRow>
                    <MembersCard>
                      <MembersHead>
                        Latest Members
                        <Badge>5 New Members</Badge>
                      </MembersHead>
                      <MembersTable>
                        <thead>
                          <tr>
                            <SrHead>SR<br />No.</SrHead>
                            <NameHead>Employee Name</NameHead>
                            <th>Company Name</th>
                          </tr>
                        </thead>
                      </MembersTable>
                    </MembersCard>
                    <GenderCard>
                      <GenderTitle>Gender</GenderTitle>
                      <GenderChart />
                    </GenderCard>
                    <InstaCard>
                      <InstaGlyph><InstaIcon /></InstaGlyph>
                      <InstaName>mewoworknest<br />Our Instagram</InstaName>
                    </InstaCard>
                  </BottomRow>

                  <Footer>
                    <span>
                      <FooterBold>Copyright ©2020 </FooterBold>
                      <FooterLink>BizNest.</FooterLink> All rights reserved.
                      <FooterBold>Version</FooterBold> 1.0
                    </span>
                  </Footer>
                </Main>
                <VScroll>
                  <VArrow />
                  <VThumb />
                  <VArrow $down />
                </VScroll>
              </PaneRow>
              <HScroll>
                <HThumb />
                <HArrow />
                <ScrollCorner />
              </HScroll>
            </RightPane>
            <StatusBubble>Waiting for localhost…</StatusBubble>
          </Viewport>
        </Browser>
      </Workspace>
    </Desktop>
  )
}
